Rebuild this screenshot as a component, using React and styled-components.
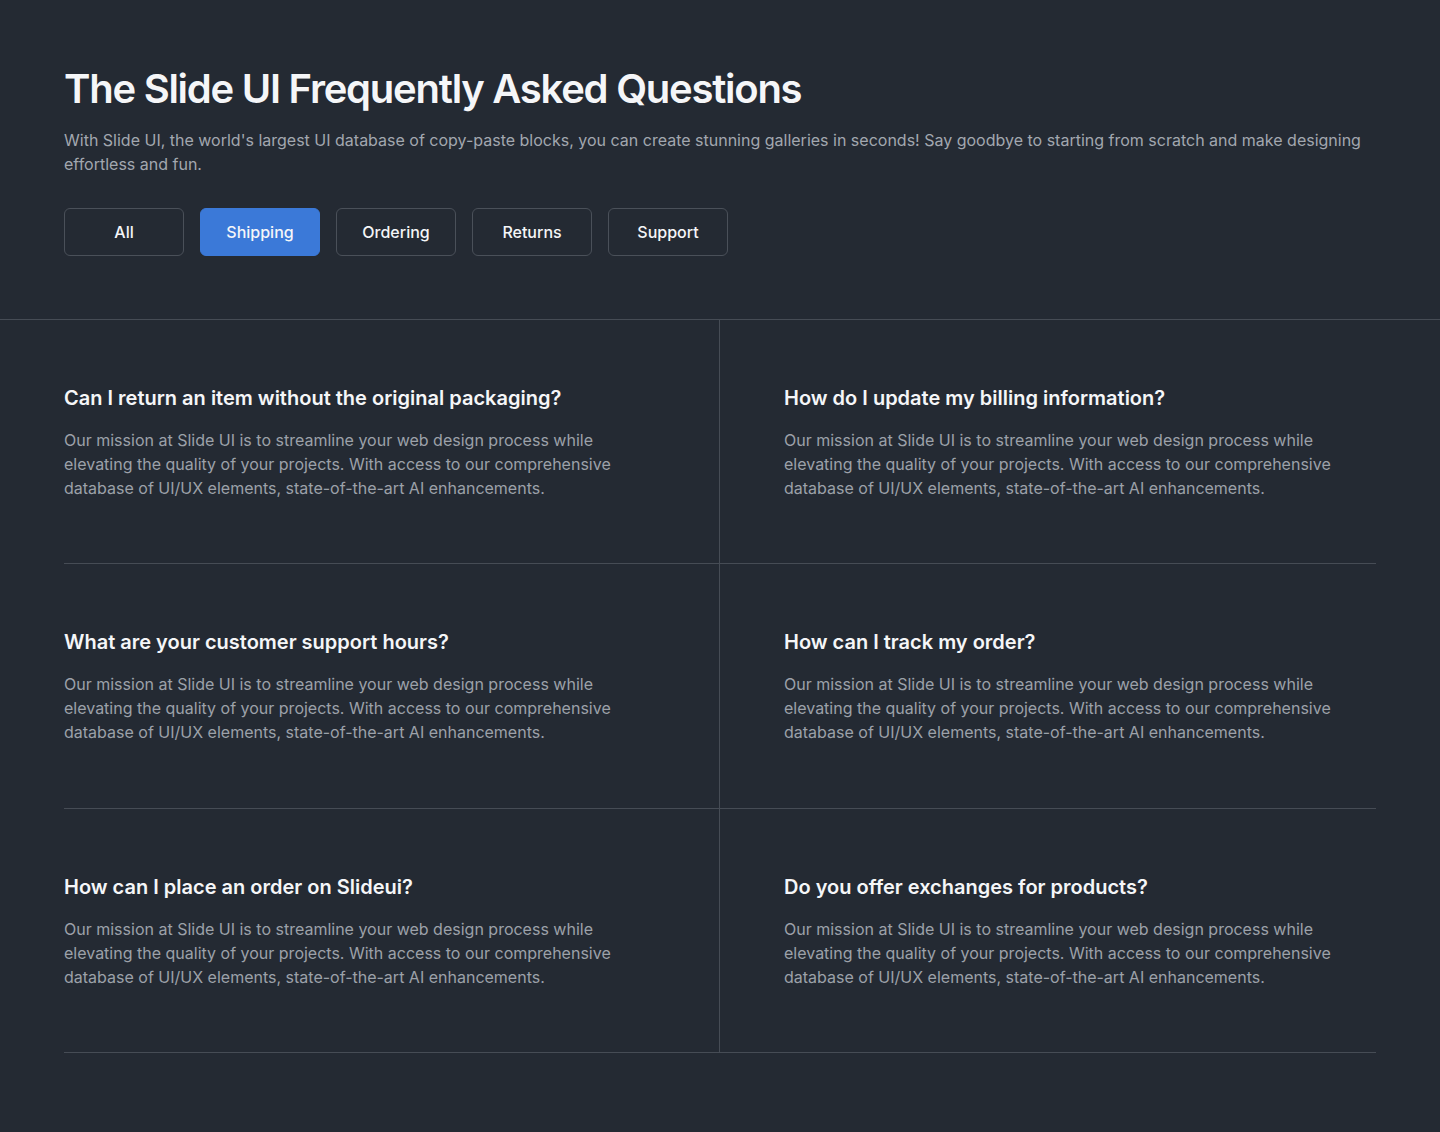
import styled, { createGlobalStyle } from 'styled-components';

const categories = ['All', 'Shipping', 'Ordering', 'Returns', 'Support'];

const answer =
  'Our mission at Slide UI is to streamline your web design process while elevating the quality of your projects. With access to our comprehensive database of UI/UX elements, state-of-the-art AI enhancements.';

const faqs = [
  'Can I return an item without the original packaging?',
  'How do I update my billing information?',
  'What are your customer support hours?',
  'How can I track my order?',
  'How can I place an order on Slideui?',
  'Do you offer exchanges for products?',
];

const GlobalStyle = createGlobalStyle`
  * { box-sizing: border-box; }
  body {
    margin: 0;
    background: #242a33;
    font-family: Inter, "Noto Sans", sans-serif;
    -webkit-font-smoothing: antialiased;
  }
`;

function App() {
  return (
    <Styled.Page>
      <GlobalStyle />
      <Styled.Header>
        <Styled.Title>The Slide UI Frequently Asked Questions</Styled.Title>
        <Styled.Lead>
          With Slide UI, the world's largest UI database of copy-paste blocks, you can create stunning
          galleries in seconds! Say goodbye to starting from scratch and make designing effortless and fun.
        </Styled.Lead>
        <Styled.Tabs>
          {categories.map((c) => (
            <Styled.Tab key={c} type="button" $active={c === 'Shipping'}>
              {c}
            </Styled.Tab>
          ))}
        </Styled.Tabs>
      </Styled.Header>
      <Styled.Grid>
        {faqs.map((q, i) => (
          <Styled.Cell key={q} $right={i % 2 === 1}>
            <Styled.Question>{q}</Styled.Question>
            <Styled.Answer>{answer}</Styled.Answer>
          </Styled.Cell>
        ))}
      </Styled.Grid>
    </Styled.Page>
  );
}

export default App;

const Styled = {
  Page: styled.div`
    min-height: 1132px;
    background: #242a33;
    padding-bottom: 80px;
  `,
  Header: styled.header`
    padding: 65px 64px 63px;
    border-bottom: 1px solid #464c55;
  `,
  Title: styled.h1`
    margin: 0;
    font-size: 40px;
    line-height: 48px;
    font-weight: 600;
    letter-spacing: -1.25px;
    color: #f5f6f8;
  `,
  Lead: styled.p`
    margin: 15px 0 0;
    font-size: 16px;
    line-height: 24px;
    color: #a2a7af;
    max-width: 1312px;
  `,
  Tabs: styled.div`
    display: flex;
    gap: 16px;
    margin-top: 32px;
  `,
  Tab: styled.button`
    width: 120px;
    height: 48px;
    border-radius: 6px;
    font-family: inherit;
    font-size: 16px;
    font-weight: 500;
    color: #f5f6f8;
    cursor: pointer;
    background: ${(p) => (p.$active ? '#3b79d8' : 'transparent')};
    border: 1px solid ${(p) => (p.$active ? '#3b79d8' : '#4a5059')};
  `,
  Grid: styled.div`
    display: grid;
    grid-template-columns: 1fr 1fr;
    padding: 0 64px;
  `,
  Cell: styled.div`
    padding: 64px ${(p) => (p.$right ? '0 63.4px 64px' : '64px 63.4px 0')};
    border-bottom: 1px solid #464c55;
    border-right: ${(p) => (p.$right ? 'none' : '1px solid #464c55')};
  `,
  Question: styled.h3`
    margin: 0;
    font-size: 20px;
    line-height: 28px;
    font-weight: 600;
    color: #f5f6f8;
  `,
  Answer: styled.p`
    margin: 16px 0 0;
    max-width: 576px;
    font-size: 16px;
    line-height: 24px;
    color: #9ca1a9;
  `,
};
